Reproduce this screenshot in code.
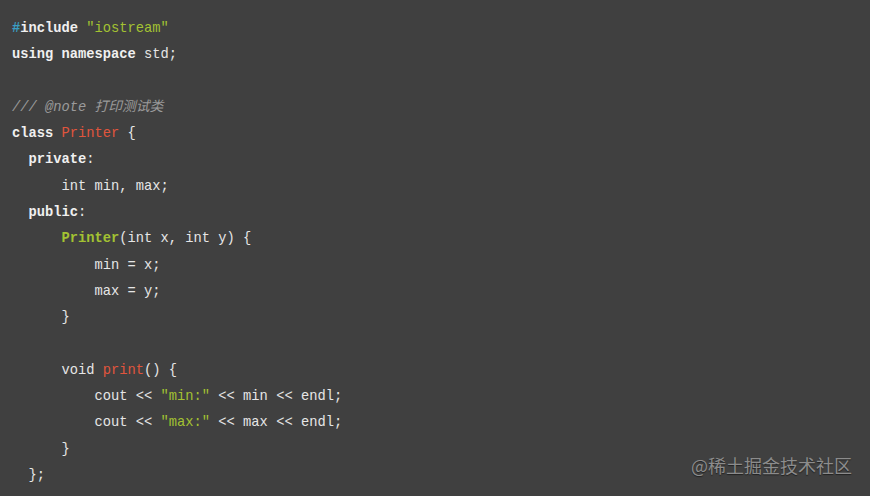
const kw = "font-bold text-[#f0f0f0]";
const str = "text-[#a3c232]";
const red = "text-[#e0553d]";

export default function App() {
  return (
    <div className="relative w-[870px] h-[496px] overflow-hidden bg-[#404040]">
      <pre
        className="pl-[12px] pt-[16px] text-[13.75px] leading-[26.3px] text-[#e6e6e6]"
        style={{ fontFamily: '"Liberation Mono", "DejaVu Sans Mono", "Noto Sans CJK SC", monospace' }}
      >
        <div><span className="font-bold text-[#3a9ec4]">#</span><span className={kw}>include</span> <span className={str}>"iostream"</span></div>
        <div><span className={kw}>using</span> <span className={kw}>namespace</span> std;</div>
        <div>&nbsp;</div>
        <div className="italic text-[#9a9a9a]">/// @note 打印测试类</div>
        <div><span className={kw}>class</span> <span className={red}>Printer</span> {"{"}</div>
        <div>  <span className={kw}>private</span>:</div>
        <div>      int min, max;</div>
        <div>  <span className={kw}>public</span>:</div>
        <div>      <span className="font-bold text-[#a3c232]">Printer</span>(int x, int y) {"{"}</div>
        <div>          min = x;</div>
        <div>          max = y;</div>
        <div>      {"}"}</div>
        <div>&nbsp;</div>
        <div>      void <span className={red}>print</span>() {"{"}</div>
        <div>          cout {"<<"} <span className={str}>"min:"</span> {"<<"} min {"<<"} endl;</div>
        <div>          cout {"<<"} <span className={str}>"max:"</span> {"<<"} max {"<<"} endl;</div>
        <div>      {"}"}</div>
        <div>  {"};"}</div>
      </pre>
      <div
        className="absolute right-[18px] bottom-[17px] text-[18px] text-[#8c8c8c] [text-shadow:0_1px_1px_rgba(0,0,0,0.5)]"
        style={{ fontFamily: '"Noto Sans CJK SC", "Noto Sans", sans-serif' }}
      >
        @稀土掘金技术社区
      </div>
    </div>
  );
}
